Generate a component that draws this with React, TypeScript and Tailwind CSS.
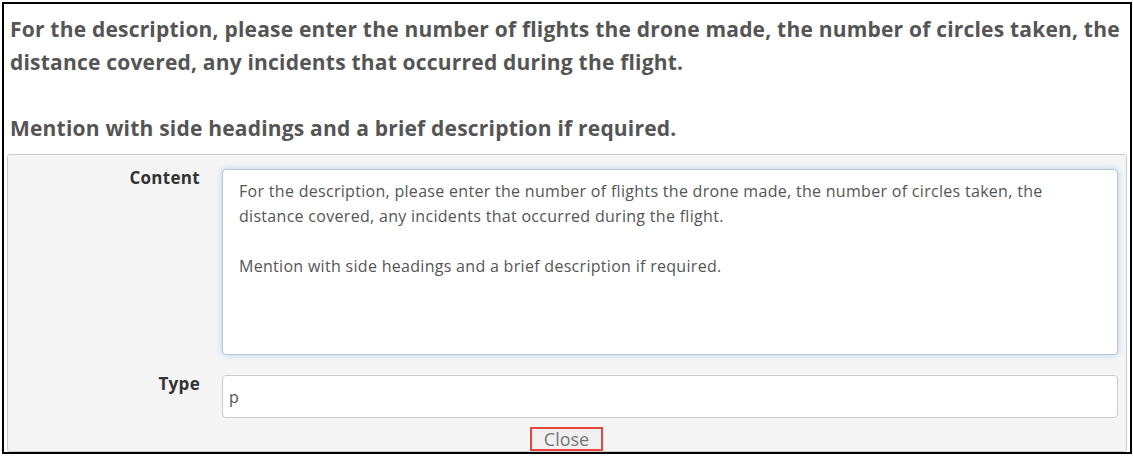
import React from "react";

const mention = "Mention with side headings and a brief description if required.";

function FieldRow({ label, children }: { label: string; children: React.ReactNode }) {
  return (
    <div className="flex items-start">
      <div className="w-[192px] shrink-0 text-right text-[17px] font-bold leading-[18px] tracking-[0.3px] text-[#333]">
        {label}
      </div>
      <div className="ml-[22px] flex-1">{children}</div>
    </div>
  );
}

export default function App() {
  return (
    <div className="h-[456px] w-[1133px] bg-white font-['Open_Sans',sans-serif]">
      <div className="ml-[2px] mt-[2px] flex h-[452px] w-[1130px] flex-col border-2 border-black px-[3px] pt-[9px]">
        <div className="whitespace-nowrap px-[3px] text-[21px] font-bold leading-[33px] tracking-[0.2px] text-[#555]">
          <p>
            For the description, please enter the number of flights the drone made, the number of circles taken, the
            <br />
            distance covered, any incidents that occurred during the flight.
          </p>
          <p className="mt-[33px]">{mention}</p>
        </div>
        <div className="mt-[9px] flex flex-1 flex-col rounded-[3px] border border-[#ccc] bg-[#f5f5f5] pr-[8px] pt-[14px]">
          <FieldRow label="Content">
            <div className="h-[186px] whitespace-nowrap rounded-[4px] border border-[#b8c6d3] bg-white px-[16px] pt-[9px] text-[16px] leading-[25px] tracking-[0.3px] text-[#555] shadow-[0_0_6px_rgba(102,175,233,0.45)]">
              <p>
                For the description, please enter the number of flights the drone made, the number of circles taken, the
                <br />
                distance covered, any incidents that occurred during the flight.
              </p>
              <p className="mt-[25px]">{mention}</p>
            </div>
          </FieldRow>
          <div className="mt-[20px]">
            <FieldRow label="Type">
              <div className="flex h-[43px] items-center rounded-[4px] border border-[#ccc] bg-white px-[6px] text-[16px] text-[#555]">
                p
              </div>
            </FieldRow>
          </div>
          <div className="mt-[9px] flex justify-center pl-[7px]">
            <button className="h-[24px] border-2 border-[#e8453c] bg-[#f0f0f0] px-[12px] text-[18px] leading-[18px] text-[#777]">
              Close
            </button>
          </div>
        </div>
      </div>
    </div>
  );
}
